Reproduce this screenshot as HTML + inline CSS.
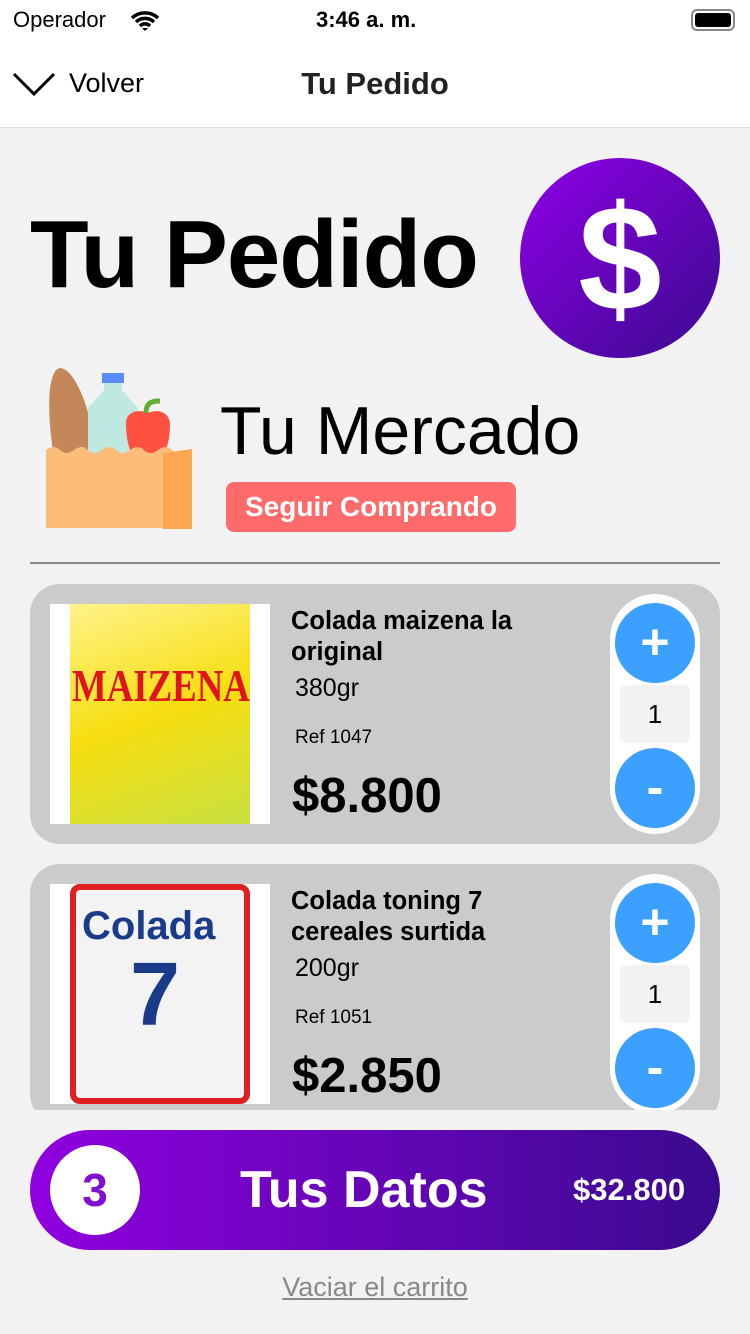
<!DOCTYPE html>
<html><head><meta charset="utf-8"><style>
*{margin:0;padding:0;box-sizing:border-box}
body{width:750px;height:1334px;background:#f2f2f2;font-family:"Liberation Sans",sans-serif;position:relative;overflow:hidden}
.a{position:absolute}
.card{position:absolute;left:30px;width:690px;height:260px;background:#cbcbcb;border-radius:30px}
.img{position:absolute;left:20px;top:20px;width:220px;height:220px;background:#fff;overflow:hidden}
.name{position:absolute;left:261px;top:22px;font-size:25.5px;font-weight:bold;line-height:31px;color:#000}
.w{position:absolute;left:265px;top:90px;font-size:25px}
.ref{position:absolute;left:265px;top:143px;font-size:19px}
.price{position:absolute;left:262px;top:184px;font-size:49px;font-weight:bold}
.step{position:absolute;left:580px;top:10px;width:90px;height:240px;background:#fff;border-radius:45px}
.btn{position:absolute;left:5px;width:80px;height:80px;border-radius:50%;background:#3ba0ff;color:#fff;font-size:50px;font-weight:bold;text-align:center;line-height:78px}
.q{position:absolute;left:10px;top:91px;width:70px;height:58px;background:#f2f2f2;border-radius:6px;text-align:center;line-height:58px;font-size:26px}
</style></head><body>
<div class="a" style="left:0;top:0;width:750px;height:128px;background:#fff;border-bottom:1px solid #ddd"></div>
<div class="a" style="left:13px;top:7px;font-size:22px">Operador</div>
<svg class="a" style="left:130px;top:10px" width="30" height="22" viewBox="0 0 30 22"><path d="M2 8a19 19 0 0 1 26 0M6 12a13 13 0 0 1 18 0M10 16a7 7 0 0 1 10 0" stroke="#000" stroke-width="3.5" fill="none"/><path d="M12 18l3 3 3-3z"/></svg>
<div class="a" style="left:316px;top:7px;font-size:22px;font-weight:bold">3:46 a. m.</div>
<div class="a" style="left:691px;top:9px;width:44px;height:22px;border:2px solid #888;border-radius:6px;padding:2px"><div style="background:#000;width:100%;height:100%;border-radius:3px"></div></div>
<svg class="a" style="left:12px;top:72px" width="44" height="24"><path d="M2 2l20 20 20-20" stroke="#000" stroke-width="3" fill="none"/></svg>
<div class="a" style="left:69px;top:68px;font-size:27px">Volver</div>
<div class="a" style="left:0;width:750px;top:66px;text-align:center;font-size:31px;font-weight:bold;color:#222">Tu Pedido</div>

<div class="a" style="left:30px;top:200px;font-size:96px;font-weight:bold;letter-spacing:-1px">Tu Pedido</div>
<div class="a" style="left:520px;top:158px;width:200px;height:200px;border-radius:50%;background:linear-gradient(135deg,#9000e8,#3a0a8e);color:#fff;font-size:150px;font-weight:bold;text-align:center;line-height:200px">$</div>

<svg class="a" style="left:46px;top:368px" width="148" height="162" viewBox="0 0 148 162">
<path d="M8 90C0 40 2 2 14 0c14 0 32 40 36 90z" fill="#c4875a"/>
<path d="M42 90V40l16-18V12h18v10l16 18v50z" fill="#bfe8e0"/><rect x="56" y="5" width="22" height="10" fill="#5a8cff"/>
<path d="M80 55c0-12 14-14 22-10 8-4 22-2 22 12 0 14-4 40-22 40-16 0-22-20-22-42z" fill="#ff5040"/><path d="M100 45c0-10 5-12 14-12" stroke="#60b030" stroke-width="5" fill="none"/>
<path d="M0 82q8-6 14 0t14 0 14 0 14 0 14 0 14 0 14 0 14 0 14 0 14 0v78H0z" fill="#fcbd7a"/><path d="M117 85l29-4v80h-29z" fill="#fba74f"/>
</svg>
<div class="a" style="left:220px;top:392px;font-size:68px">Tu Mercado</div>
<div class="a" style="left:226px;top:482px;width:290px;height:50px;background:#ff6b6b;border-radius:8px;color:#fff;font-size:28px;font-weight:bold;text-align:center;line-height:50px">Seguir Comprando</div>
<div class="a" style="left:30px;top:562px;width:690px;height:2px;background:#888"></div>

<div class="a" style="left:0;top:574px;width:750px;height:536px;overflow:hidden">
<div class="card" style="top:10px">
<div class="img"><div style="position:absolute;left:20px;top:0;width:180px;height:220px;background:linear-gradient(160deg,#fff38a,#f7de10 50%,#c8e040)"></div><div style="position:absolute;left:22px;top:55px;font-size:46px;font-weight:bold;color:#e0141e;font-family:'Liberation Serif',serif;transform:scaleX(.8);transform-origin:left">MAIZENA</div></div>
<div class="name">Colada maizena la<br>original</div><div class="w">380gr</div><div class="ref">Ref 1047</div><div class="price">$8.800</div>
<div class="step"><div class="btn" style="top:9px">+</div><div class="q">1</div><div class="btn" style="top:154px">-</div></div>
</div>
<div class="card" style="top:290px">
<div class="img"><div style="position:absolute;left:20px;top:0;width:180px;height:220px;background:#f3f3f3;border:6px solid #e02020;border-radius:10px"></div><div style="position:absolute;left:32px;top:20px;font-size:40px;font-weight:bold;color:#1a3a8a">Colada</div><div style="position:absolute;left:80px;top:60px;font-size:90px;font-weight:bold;color:#1a3a8a">7</div></div>
<div class="name">Colada toning 7<br>cereales surtida</div><div class="w">200gr</div><div class="ref">Ref 1051</div><div class="price">$2.850</div>
<div class="step"><div class="btn" style="top:9px">+</div><div class="q">1</div><div class="btn" style="top:154px">-</div></div>
</div>
</div>

<div class="a" style="left:30px;top:1130px;width:690px;height:120px;border-radius:60px;background:linear-gradient(90deg,#9000e0,#3a0a8e)">
<div class="a" style="left:20px;top:15px;width:90px;height:90px;border-radius:50%;background:#fff;color:#8010d0;font-size:46px;font-weight:bold;text-align:center;line-height:90px">3</div>
<div class="a" style="left:210px;top:30px;font-size:52px;font-weight:bold;color:#fff">Tus Datos</div>
<div class="a" style="left:543px;top:42px;font-size:31px;font-weight:bold;color:#fff">$32.800</div>
</div>
<div class="a" style="left:0;width:750px;top:1272px;text-align:center;font-size:27px;color:#888;text-decoration:underline">Vaciar el carrito</div>
</body></html>
